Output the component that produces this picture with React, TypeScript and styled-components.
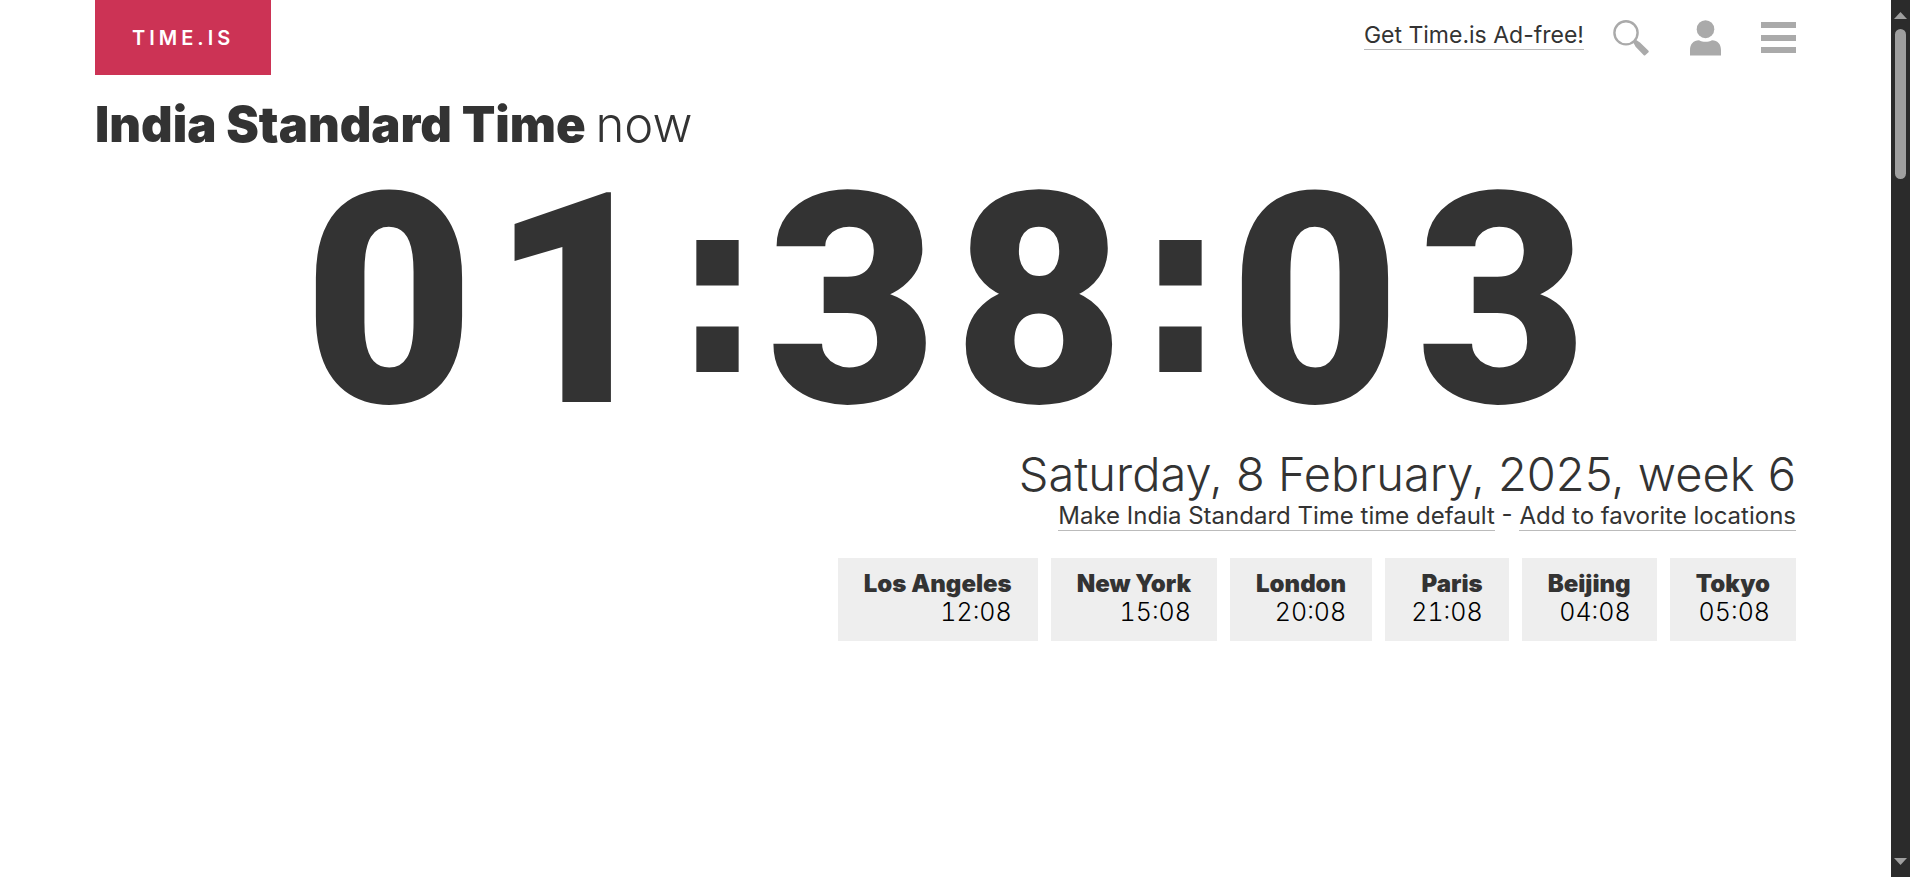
import React from "react";
import styled, { createGlobalStyle } from "styled-components";

const GlobalStyle = createGlobalStyle`
  *, *::before, *::after {
    box-sizing: border-box;
  }
  body {
    margin: 0;
    background: #fff;
    color: #333;
    font-family: Inter, "Liberation Sans", sans-serif;
  }
`;

const Shell = styled.div`
  display: flex;
  min-height: 100vh;
`;

const Page = styled.div`
  flex: 1;
  min-width: 0;
  padding: 0 95px;
`;

const TopBar = styled.header`
  display: flex;
  justify-content: space-between;
  align-items: flex-start;
`;

const Logo = styled.a`
  display: flex;
  align-items: center;
  height: 75px;
  padding: 0 37px;
  background: #cc3355;
  color: #fff;
  font-size: 20px;
  font-weight: 600;
  letter-spacing: 4px;
  text-decoration: none;
`;

const Tools = styled.nav`
  display: flex;
  align-items: center;
  height: 75px;
`;

const TextLink = styled.a`
  border-bottom: 1px solid #bbb;
  color: #333;
  font-size: 24px;
  font-weight: 400;
  text-decoration: none;
`;

const AdFreeLink = styled(TextLink)`
  margin-bottom: 4px;
  font-size: 23px;
`;

const IconRow = styled.div`
  display: flex;
  align-items: center;
  gap: 39px;
  margin-left: 28px;
`;

const IconButton = styled.button`
  display: flex;
  padding: 0;
  border: 0;
  background: none;
  color: #aaa;
  cursor: pointer;
`;

const Title = styled.h1`
  margin: 20px 0 0;
  font-size: 49px;
  font-weight: 900;
  line-height: 60px;
`;

const Light = styled.span`
  font-weight: 300;
`;

const Clock = styled.time`
  display: flex;
  justify-content: center;
  align-items: center;
  height: 292px;
  font-family: Roboto, "Liberation Sans", sans-serif;
  font-size: 295px;
  font-weight: 900;
  line-height: 292px;
`;

const Digit = styled.span`
  width: 187px;
  text-align: center;
`;

const Separator = styled.span`
  width: 89px;
  padding-bottom: 24px;
  font-family: "DejaVu Sans", sans-serif;
  font-size: 240px;
  font-weight: 700;
  text-align: center;
`;

const DateLine = styled.h2`
  margin: 0;
  font-size: 47px;
  font-weight: 300;
  line-height: 54px;
  text-align: right;
`;

const Actions = styled.p`
  margin: 0;
  font-size: 24px;
  font-weight: 400;
  line-height: 30px;
  text-align: right;
`;

const Cities = styled.ul`
  display: flex;
  flex-wrap: wrap;
  justify-content: flex-end;
  gap: 13px;
  margin: 27px 0 0;
  padding: 0;
  list-style: none;
`;

const City = styled.li`
  padding: 11px 26px 14px;
  background: #eee;
  text-align: right;
  line-height: 29px;
`;

const CityName = styled.a`
  display: block;
  color: #333;
  font-size: 24px;
  font-weight: 900;
  text-decoration: none;
`;

const CityTime = styled.time`
  display: block;
  color: #000;
  font-size: 25px;
  font-weight: 300;
  font-variant-numeric: tabular-nums;
`;

const ScrollTrack = styled.aside`
  position: sticky;
  top: 0;
  display: flex;
  flex-direction: column;
  align-items: center;
  width: 19px;
  height: 100vh;
  padding: 12px 0;
  background: #2b2b2b;
`;

const ScrollThumb = styled.div`
  width: 11px;
  height: 150px;
  margin: 10px 0 auto;
  border-radius: 6px;
  background: #9f9f9f;
`;

const cities = [
  { name: "Los Angeles", time: "12:08" },
  { name: "New York", time: "15:08" },
  { name: "London", time: "20:08" },
  { name: "Paris", time: "21:08" },
  { name: "Beijing", time: "04:08" },
  { name: "Tokyo", time: "05:08" },
];

function SearchIcon() {
  return (
    <svg width="39" height="37" viewBox="0 0 39 37" aria-hidden="true">
      <circle cx="14" cy="13.800" r="11.600" fill="none" stroke="currentColor" strokeWidth="2.400" />
      <path d="M21.200 23.500 L24.400 21 Q26 22.300 28 23.600 L36.500 31.700 Q37.100 32.500 36.500 33.200 L33.200 36.300 Q32.500 36.800 31.800 36.200 L23.600 27.800 Q22.600 25.800 21.200 23.500 Z" fill="currentColor" />
    </svg>
  );
}

function UserIcon() {
  return (
    <svg width="32" height="36" viewBox="0 0 32 36" aria-hidden="true">
      <ellipse cx="15.500" cy="9.200" rx="8.800" ry="9" fill="currentColor" />
      <path d="M0 35.500 V30 C0 24 3.500 20.200 9 20.200 C13 22.200 18 22.200 22 20.200 C27.500 20.200 31 24 31 30 V35.500 Z" fill="currentColor" />
    </svg>
  );
}

function MenuIcon() {
  return (
    <svg width="35" height="31" viewBox="0 0 35 31" aria-hidden="true">
      <path d="M0 0H35V6H0ZM0 13H35V19H0ZM0 25H35V31H0Z" fill="currentColor" />
    </svg>
  );
}

function Arrow({ down }: { down?: boolean }) {
  return (
    <svg width="13" height="7" viewBox="0 0 13 7" aria-hidden="true">
      <path d={down ? "M0 0H13L6.5 7Z" : "M0 7H13L6.5 0Z"} fill="#9f9f9f" />
    </svg>
  );
}

export default function App() {
  return (
    <Shell>
      <GlobalStyle />
      <Page>
        <TopBar>
          <Logo href="#">TIME.IS</Logo>
          <Tools>
            <AdFreeLink href="#adfree">Get Time.is Ad-free!</AdFreeLink>
            <IconRow>
              <IconButton aria-label="Search"><SearchIcon /></IconButton>
              <IconButton aria-label="Account"><UserIcon /></IconButton>
              <IconButton aria-label="Menu"><MenuIcon /></IconButton>
            </IconRow>
          </Tools>
        </TopBar>
        <main>
          <Title>India Standard Time <Light>now</Light></Title>
          <Clock>
            {"01:38:03".split("").map((ch, i) =>
              ch === ":" ? <Separator key={i}>{ch}</Separator> : <Digit key={i}>{ch}</Digit>
            )}
          </Clock>
          <DateLine>Saturday, 8 February, 2025, week 6</DateLine>
          <Actions>
            <TextLink href="#default">Make India Standard Time time default</TextLink>
            {" - "}
            <TextLink href="#favorite">Add to favorite locations</TextLink>
          </Actions>
          <Cities>
            {cities.map(({ name, time }) => (
              <City key={name}>
                <CityName href="#city">{name}</CityName>
                <CityTime>{time}</CityTime>
              </City>
            ))}
          </Cities>
        </main>
      </Page>
      <ScrollTrack aria-hidden="true">
        <Arrow />
        <ScrollThumb />
        <Arrow down />
      </ScrollTrack>
    </Shell>
  );
}
